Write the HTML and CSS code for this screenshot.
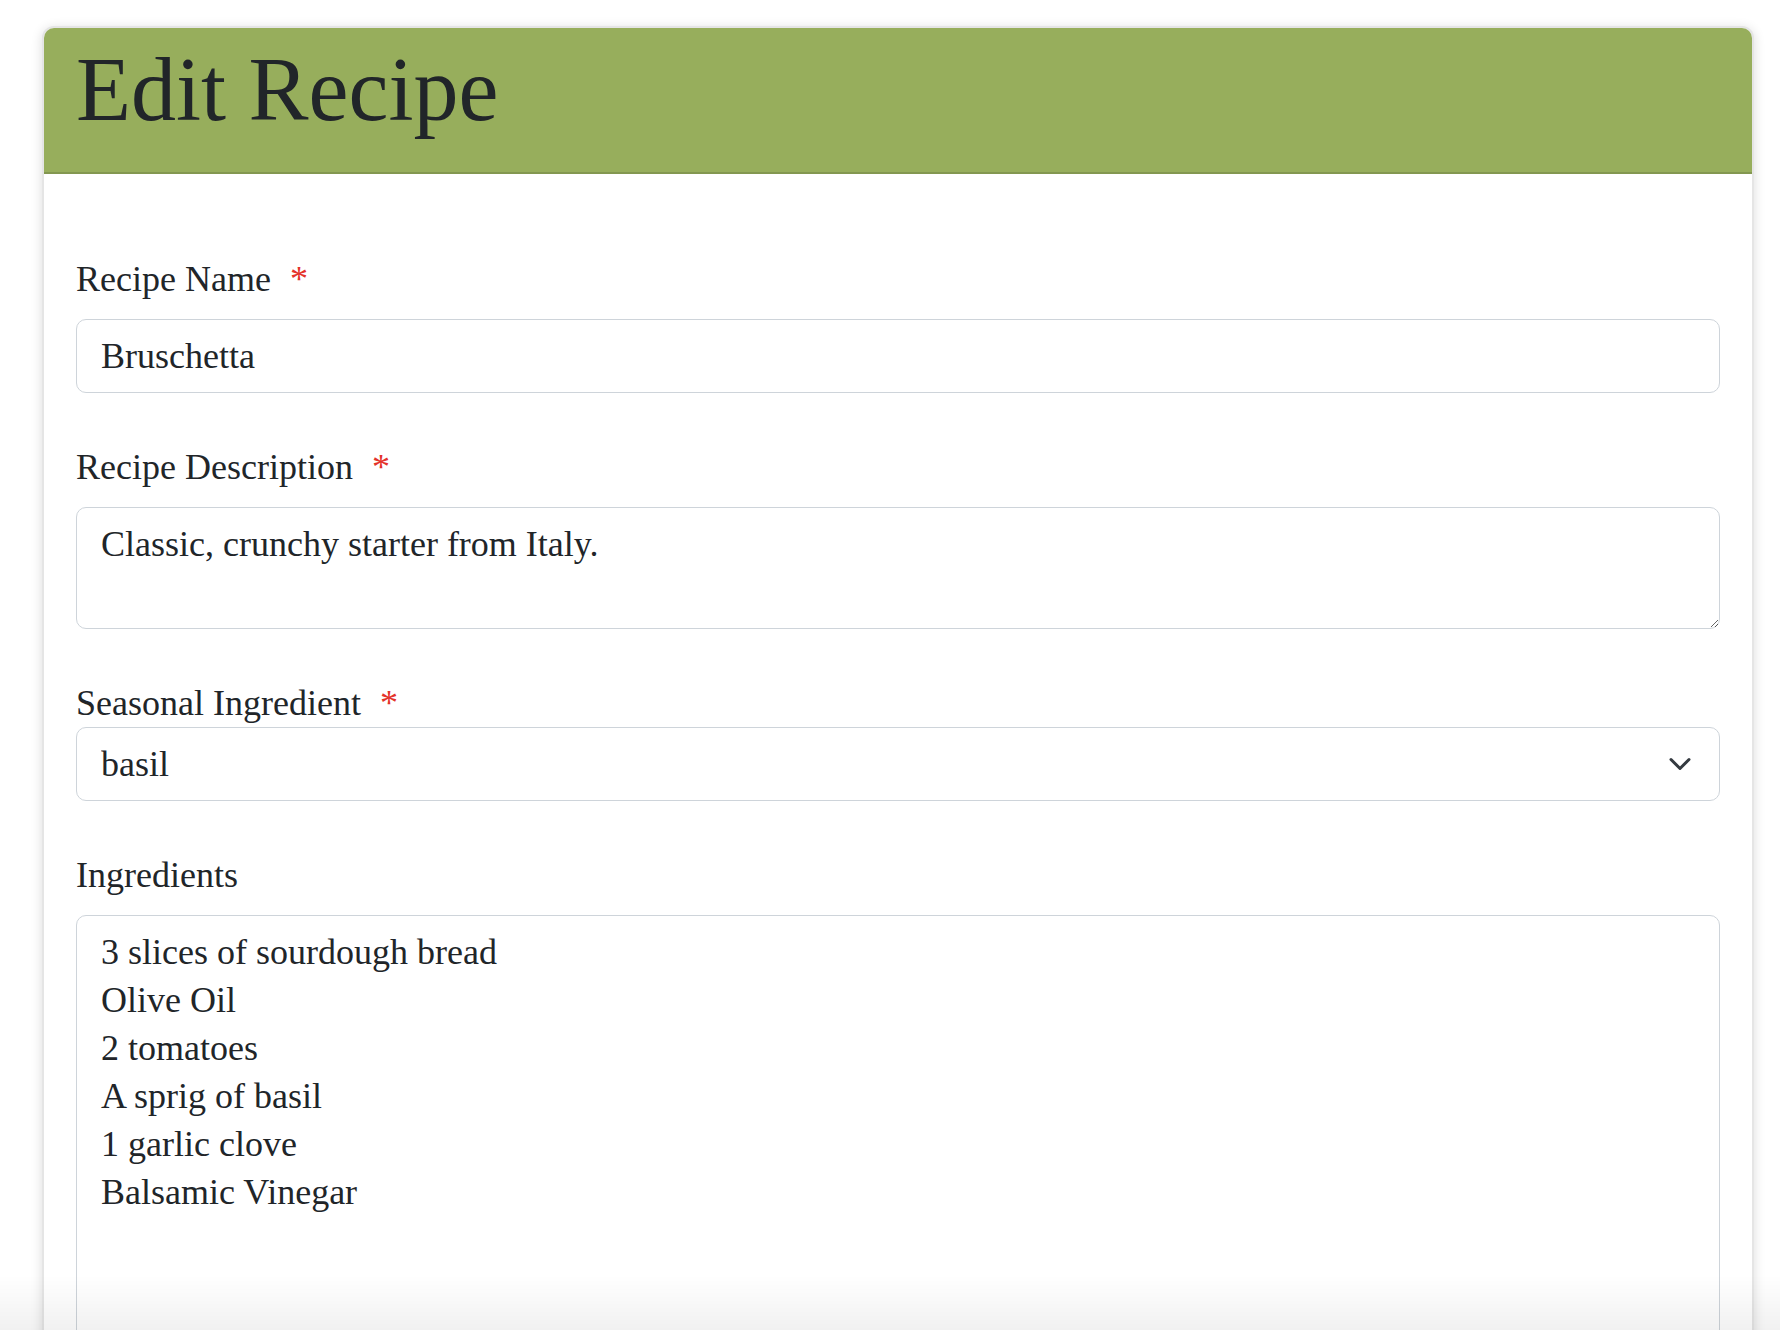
FILE: index.html
```
<!DOCTYPE html>
<html lang="en">
<head>
<meta charset="utf-8">
<title>Edit Recipe</title>
<link rel="stylesheet" href="styles.css">
</head>
<body>
<div class="page">
  <div class="card">
    <div class="card-header">
      <h1 class="title">Edit Recipe</h1>
    </div>
    <form class="card-body">
      <div class="group">
        <label class="label" for="name">Recipe Name <span class="req">*</span></label>
        <input class="control" id="name" type="text" value="Bruschetta">
      </div>
      <div class="group">
        <label class="label" for="desc">Recipe Description <span class="req">*</span></label>
        <textarea class="control area-desc" id="desc" rows="2">Classic, crunchy starter from Italy.</textarea>
      </div>
      <div class="group">
        <label class="label label-tight" for="season">Seasonal Ingredient <span class="req">*</span></label>
        <div class="select-wrap">
          <select class="control select" id="season">
            <option>basil</option>
          </select>
          <svg class="chevron" width="32" height="24" viewBox="0 0 16 16" aria-hidden="true">
            <path d="M2 5l6 6 6-6" fill="none" stroke="#343a40" stroke-width="2" stroke-linecap="round" stroke-linejoin="round"/>
          </svg>
        </div>
      </div>
      <div class="group">
        <label class="label" for="ingredients">Ingredients</label>
        <textarea class="control area-ing" id="ingredients" rows="9">3 slices of sourdough bread
Olive Oil
2 tomatoes
A sprig of basil
1 garlic clove
Balsamic Vinegar</textarea>
      </div>
    </form>
  </div>
</div>
<div class="fade"></div>
</body>
</html>
```
FILE: styles.css
```
html, body {
  margin: 0;
  padding: 0;
  background: #ffffff;
  overflow: hidden;
}

body {
  font-family: "Liberation Serif", "DejaVu Serif", serif;
  font-size: 36px;
  line-height: 48px;
  color: #212529;
}

.page {
  padding: 26px 26px 0 42px;
}

.card {
  background: #ffffff;
  border: 2px solid rgba(0, 0, 0, 0.1);
  border-radius: 12px;
  box-shadow: 0 2px 12px rgba(0, 0, 0, 0.14);
  overflow: hidden;
}

.card-header {
  background: #97ae5c;
  border-bottom: 2px solid rgba(0, 0, 0, 0.13);
  padding: 14px 32px 17px;
}

.title {
  margin: 0 0 17px;
  font-family: "Liberation Serif", "DejaVu Serif", serif;
  font-weight: 400;
  font-size: 90px;
  line-height: 96px;
  color: #212529;
}

.card-body {
  display: flex;
  flex-direction: column;
  padding: 81px 32px 32px;
  margin: 0;
}

.group {
  margin-bottom: 50px;
}

.label {
  display: block;
  margin-bottom: 16px;
}

.label-tight {
  margin-bottom: 0;
}

.req {
  color: #e4322a;
  margin-left: 10px;
}

.control {
  display: block;
  box-sizing: border-box;
  width: 100%;
  margin: 0;
  padding: 12px 24px;
  border: 1px solid #ced4da;
  border-radius: 10px;
  background: #ffffff;
  font-family: inherit;
  font-size: 36px;
  line-height: 48px;
  color: #212529;
  outline: none;
}

input.control {
  height: 74px;
}

.area-desc {
  height: 122px;
  resize: vertical;
}

.area-ing {
  height: 520px;
  resize: vertical;
}

.select-wrap {
  position: relative;
}

.select {
  height: 74px;
  appearance: none;
  -webkit-appearance: none;
  padding-right: 80px;
}

.chevron {
  position: absolute;
  right: 24px;
  top: 50%;
  margin-top: -12px;
  pointer-events: none;
}

.fade {
  position: fixed;
  left: 0;
  right: 0;
  bottom: 0;
  height: 55px;
  background: linear-gradient(to bottom, rgba(0, 0, 0, 0), rgba(0, 0, 0, 0.055));
  pointer-events: none;
}
```
